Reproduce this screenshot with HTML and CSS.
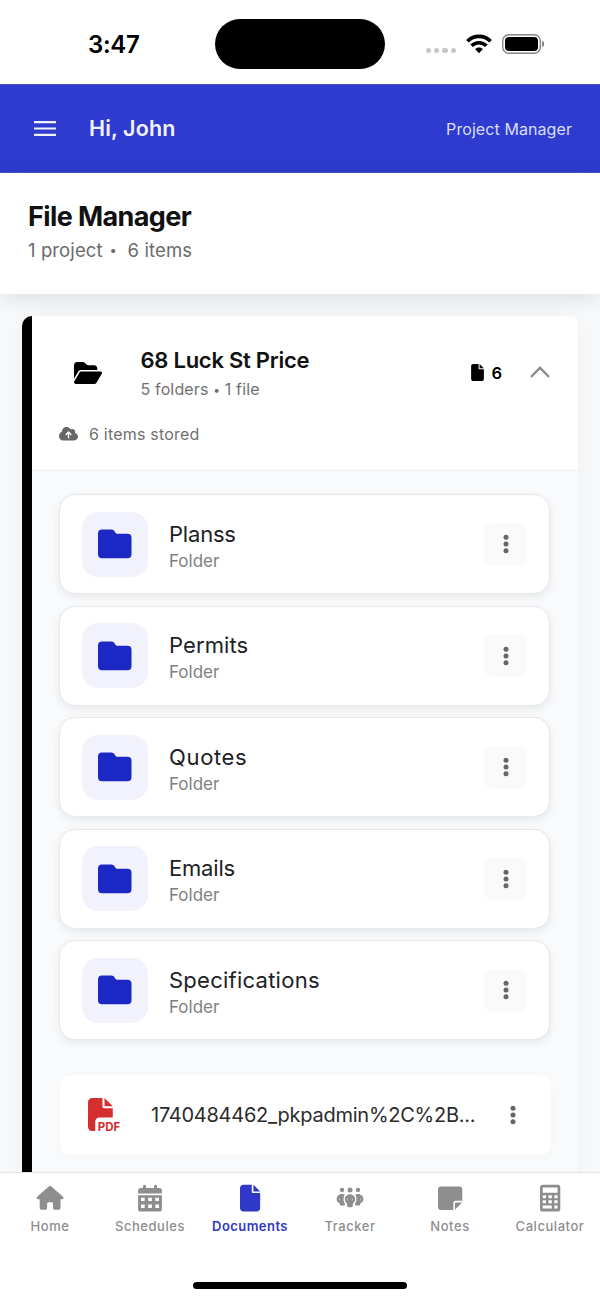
FILE: index.html
```html
<!DOCTYPE html>
<html lang="en">
<head>
<meta charset="utf-8">
<title>File Manager</title>
<link rel="stylesheet" href="styles.css">
</head>
<body>
<svg class="defs" width="0" height="0" aria-hidden="true">
  <symbol id="folder" viewBox="0 0 34 30"><path d="M0 4.5A4 4 0 0 1 4 .5H13.2C15 .5 15.8 1.2 16.6 2.4L17.7 3.9C18.2 4.5 18.7 4.7 19.5 4.7H29.5A4 4 0 0 1 33.5 8.7V25.3A4 4 0 0 1 29.5 29.3H4A4 4 0 0 1 0 25.3Z"/></symbol>
  <symbol id="file" viewBox="0 0 384 512"><path d="M0 64C0 28.7 28.7 0 64 0H224V128c0 17.7 14.3 32 32 32H384V448c0 35.3-28.7 64-64 64H64c-35.3 0-64-28.7-64-64V64zm384 64H256V0L384 128z"/></symbol>
  <symbol id="dots" viewBox="0 0 6 20"><circle cx="3" cy="3.2" r="2.5"/><circle cx="3" cy="10" r="2.5"/><circle cx="3" cy="16.8" r="2.5"/></symbol>
</svg>
<div class="screen">
  <div class="status">
    <span class="time">3:47</span>
    <span class="island"></span>
    <span class="indicators">
      <span class="signal"><i></i><i></i><i></i><i></i></span>
      <svg class="wifi" viewBox="0 0 26 20"><g fill="none" stroke="#000" stroke-width="3.6"><path d="M1.4 7.2C8 .7 18 .7 24.6 7.2"/><path d="M5.6 11.8C9.8 7.7 16.2 7.7 20.4 11.8"/></g><path d="M9 15.1C11.3 13 14.7 13 17 15.1L13 19.2Z"/></svg>
      <svg class="battery" viewBox="0 0 43 20"><rect x=".7" y=".7" width="37.6" height="18.6" rx="6.2" fill="none" stroke="#858585" stroke-width="1.4"/><rect x="3" y="3" width="33" height="14" rx="4"/><path d="M40.2 6.8C42.8 8 42.8 12 40.2 13.2Z" fill="#777"/></svg>
    </span>
  </div>
  <header class="topbar">
    <svg class="menu" viewBox="0 0 22 15"><path d="M0 1.2H22M0 7.5H22M0 13.8H22" stroke="#f1f2ff" stroke-width="2.2"/></svg>
    <span class="hello">Hi, John</span>
    <span class="role">Project Manager</span>
  </header>
  <section class="heading">
    <h1>File Manager</h1>
    <p><span>1 project</span><span class="bullet">•</span><span>6 items</span></p>
  </section>
  <main class="content">
    <article class="project">
      <div class="project-head">
        <div class="project-row">
          <svg class="folder-open" viewBox="0 32 576 448"><path d="M88.700 223.800L0 375.800V96C0 60.700 28.700 32 64 32H181.500c17 0 33.300 6.700 45.300 18.700l26.500 26.500c12 12 28.300 18.700 45.300 18.700H416c35.300 0 64 28.700 64 64v32H144c-22.800 0-43.800 12.100-55.300 31.800zm27.600 16.100C122.100 230 132.600 224 144 224H544c11.500 0 22 6.100 27.700 16.100s5.700 22.200-.1 32.100l-112 192C453.900 474 443.400 480 432 480H32c-11.500 0-22-6.100-27.700-16.100s-5.700-22.200.1-32.100l112-192z"/></svg>
          <div class="project-text">
            <h2>68 Luck St Price</h2>
            <p>5 folders <span class="dot">•</span> 1 file</p>
          </div>
          <svg class="count-icon"><use href="#file"/></svg>
          <span class="count">6</span>
          <svg class="chevron" viewBox="0 0 20 12"><path d="M1 11L10 1.800L19 11" fill="none" stroke="#8e8e8e" stroke-width="2.400"/></svg>
        </div>
        <div class="stored">
          <svg class="cloud" viewBox="0 32 640 448"><path d="M144 480C64.500 480 0 415.500 0 336c0-62.800 40.200-116.200 96.200-135.900c-.1-2.700-.2-5.400-.2-8.100c0-88.400 71.600-160 160-160c59.300 0 111 32.200 138.700 80.200C409.900 102 428.300 96 448 96c53 0 96 43 96 96c0 12.200-2.300 23.800-6.400 34.600C596 238.400 640 290.100 640 352c0 70.700-57.300 128-128 128H144zm79-217c-9.400 9.400-9.400 24.600 0 33.900s24.600 9.400 33.900 0l39-39V392c0 13.300 10.700 24 24 24s24-10.700 24-24V257.900l39 39c9.400 9.400 24.600 9.400 33.900 0s9.400-24.600 0-33.900l-80-80c-9.400-9.400-24.600-9.400-33.900 0l-80 80z"/></svg>
          <span>6 items stored</span>
        </div>
      </div>
      <div class="project-body">
        <div class="folder-card">
          <span class="tile"><svg class="folder"><use href="#folder"/></svg></span>
          <div class="folder-text"><h3 class="tight">Planss</h3><p>Folder</p></div>
          <span class="more"><svg class="dots"><use href="#dots"/></svg></span>
        </div>
        <div class="folder-card">
          <span class="tile"><svg class="folder"><use href="#folder"/></svg></span>
          <div class="folder-text"><h3>Permits</h3><p>Folder</p></div>
          <span class="more"><svg class="dots"><use href="#dots"/></svg></span>
        </div>
        <div class="folder-card">
          <span class="tile"><svg class="folder"><use href="#folder"/></svg></span>
          <div class="folder-text"><h3 class="wide">Quotes</h3><p>Folder</p></div>
          <span class="more"><svg class="dots"><use href="#dots"/></svg></span>
        </div>
        <div class="folder-card">
          <span class="tile"><svg class="folder"><use href="#folder"/></svg></span>
          <div class="folder-text"><h3 class="tight">Emails</h3><p>Folder</p></div>
          <span class="more"><svg class="dots"><use href="#dots"/></svg></span>
        </div>
        <div class="folder-card">
          <span class="tile"><svg class="folder"><use href="#folder"/></svg></span>
          <div class="folder-text"><h3 class="long">Specifications</h3><p>Folder</p></div>
          <span class="more"><svg class="dots"><use href="#dots"/></svg></span>
        </div>
        <div class="file-card">
          <svg class="pdf" viewBox="0 0 33 36"><path transform="scale(.0645)" d="M0 64C0 28.700 28.700 0 64 0H224V128c0 17.700 14.300 32 32 32H384V304H176c-35.300 0-64 28.700-64 64V512H64c-35.300 0-64-28.700-64-64V64zm384 64H256V0L384 128z"/><text x="9.800" y="32.600" textLength="22.400" lengthAdjust="spacingAndGlyphs">PDF</text></svg>
          <span class="file-name">1740484462_pkpadmin%2C%2B...</span>
          <svg class="dots"><use href="#dots"/></svg>
        </div>
      </div>
    </article>
  </main>
  <nav class="tabs">
    <a class="tab"><svg viewBox="0 0 28 28"><path transform="translate(.7 2) scale(.0465)" d="M575.800 255.500c0 18-15 32.100-32 32.100h-32l.7 160.200c0 2.700-.2 5.400-.5 8.100V472c0 22.100-17.900 40-40 40H392c-22.100 0-40-17.900-40-40V384c0-17.700-14.300-32-32-32H256c-17.700 0-32 14.300-32 32v88c0 22.100-17.900 40-40 40H104c-22.100 0-40-17.900-40-40V287.600H32c-18 0-32-14-32-32.100c0-9 3-17 10-24L266.400 8c7-7 15-8 22-8s15 2 21 7L564.800 231.500c8 7 12 15 11 24z"/></svg><span>Home</span></a>
    <a class="tab"><svg viewBox="0 0 28 28"><path fill-rule="evenodd" d="M2.100 9.400V6.700Q2.100 4.100 4.700 4.100H7V2.200a1.500 1.500 0 0 1 3 0V4.100H18V2.200a1.500 1.500 0 0 1 3 0V4.100h2.300Q25.900 4.100 25.900 6.700V9.400ZM2.100 11.200H25.900V25Q25.900 27.600 23.300 27.600H4.700Q2.100 27.600 2.100 25ZM5 13.700v3.300h3.700v-3.300ZM12.200 13.700v3.300h3.700v-3.300ZM19.300 13.700v3.300h3.700v-3.300ZM5 20.600v3.300h3.700v-3.300ZM12.200 20.600v3.300h3.700v-3.300ZM19.300 20.600v3.300h3.700v-3.300Z"/></svg><span>Schedules</span></a>
    <a class="tab active"><svg viewBox="0 0 28 28"><path transform="translate(4 .7) scale(.0525)" d="M0 64C0 28.700 28.700 0 64 0H224V128c0 17.700 14.300 32 32 32H384V448c0 35.300-28.700 64-64 64H64c-35.300 0-64-28.700-64-64V64zm384 64H256V0L384 128z"/></svg><span>Documents</span></a>
    <a class="tab"><svg viewBox="0 0 28 28"><circle cx="6" cy="5.900" r="2.200"/><circle cx="14" cy="6.100" r="2.500"/><circle cx="22" cy="5.900" r="2.200"/><path fill-rule="evenodd" d="M14 10.200C17 10.200 19.200 12.500 19.200 15.300C19.200 17.300 18.200 18.700 16.900 19.500V21.500Q16.900 23.300 15.300 23.300H12.700Q11.100 23.300 11.100 21.500V19.500C9.800 18.700 8.800 17.300 8.800 15.300C8.800 12.500 11 10.200 14 10.200ZM11.800 13.700Q10.700 15.400 11.800 17ZM16.200 13.700V17Q17.300 15.400 16.200 13.700Z"/><path fill-rule="evenodd" d="M8.900 10.500C7.200 12.800 6.900 17.300 9 19.600V20.200Q9 21.500 7.700 21.500H5.200Q3.700 21.500 3.700 20V19.200C1.700 18.700.6 17 .6 15.300C.6 12.500 3 10.100 5.800 10.100Q7.500 10.100 8.900 10.500ZM3.800 13.500Q2.700 15.200 3.800 16.900ZM19.100 10.500C20.800 12.800 21.100 17.300 19 19.600V20.200Q19 21.500 20.300 21.500H22.800Q24.300 21.500 24.300 20V19.200C26.300 18.700 27.400 17 27.400 15.300C27.400 12.500 25 10.100 22.200 10.100Q20.500 10.100 19.100 10.500ZM24.200 13.500Q25.300 15.200 24.200 16.900Z"/></svg><span>Tracker</span></a>
    <a class="tab"><svg viewBox="0 0 28 28"><path d="M5 2.500H23.300Q26.300 2.500 26.300 5.500V16.800H19.900Q17.300 16.800 17.300 19.400V26H5Q2 26 2 23V5.500Q2 2.500 5 2.500ZM26.100 18.600L18.900 25.800V19.600Q18.900 18.600 19.900 18.600Z"/></svg><span>Notes</span></a>
    <a class="tab"><svg viewBox="0 0 28 28"><path fill-rule="evenodd" d="M7 .7H21.600Q24.300 .7 24.300 3.400V25Q24.300 27.600 21.600 27.600H6.700Q4 27.600 4 25V3.400Q4 .7 7 .7ZM6.700 3.500V8.700H21.600V3.500ZM6.700 11.200v3h3.300v-3ZM12.500 11.200v3h3.300v-3ZM18.300 11.200v3h3.300v-3ZM6.700 16.300v3h3.300v-3ZM12.500 16.300v3h3.300v-3ZM18.300 16.300v3h3.300v-3ZM6.700 21.500v3h9.100v-3ZM18.300 21.500v3h3.300v-3Z"/></svg><span>Calculator</span></a>
  </nav>
  <div class="home-area"><span class="home-indicator"></span></div>
</div>
</body>
</html>
```
FILE: styles.css
```css
* { box-sizing: border-box; }
body, h1, h2, h3, p { margin: 0; }
body { font-family: Inter, "Liberation Sans", sans-serif; background: #fff; }
.defs { position: absolute; }
svg { display: block; flex: none; }
span, h1, h2, h3, p { white-space: nowrap; }
.screen { width: 600px; height: 1300px; display: flex; flex-direction: column; overflow: hidden; }

.status { height: 84px; flex: none; display: grid; grid-template-columns: 215px 170px 215px; align-items: center; padding-top: 4px; }
.time { padding: 2px 0 0 88px; font-size: 24px; font-weight: 600; letter-spacing: -0.3px; line-height: 30px; }
.island { height: 50px; border-radius: 25px; background: #000; }
.indicators { display: flex; align-items: center; padding-left: 41px; }
.signal { display: flex; gap: 3px; padding-top: 13px; }
.signal i { width: 5.200px; height: 5.200px; border-radius: 50%; background: #c6c6c6; }
.wifi { width: 26px; height: 20px; margin-left: 10px; }
.battery { width: 43px; height: 20px; margin-left: 10px; }

.topbar { height: 89px; flex: none; display: flex; align-items: center; padding: 0 28px 0 33.500px; background: #2f3bce; border-top: 1px solid #4b54b8; border-bottom: 1px solid #4851c4; color: #f1f2ff; }
.menu { width: 22px; height: 15px; }
.hello { margin-left: 33.500px; padding-bottom: 2px; font-size: 21.500px; font-weight: 600; letter-spacing: .15px; }
.role { margin-left: auto; font-size: 16px; letter-spacing: 0.08px; color: #d9ddff; padding-top: 1px; }

.heading { height: 121px; flex: none; padding: 27px 28px 0; background: #fff; position: relative; box-shadow: 0 4px 20px rgba(30, 40, 45, .13); }
.heading h1 { font-size: 27px; line-height: 34px; font-weight: 650; letter-spacing: -0.6px; color: #111; }
.heading p { display: flex; margin-top: 4px; font-size: 18.500px; letter-spacing: .1px; line-height: 24px; color: #6b6b6b; }
.bullet { width: 25px; padding-left: 7px; font-size: 13px; }

.content { height: 878px; flex: none; padding: 22px 22px 0 22px; background: #f8f9fb; overflow: hidden; }
.project { height: 900px; border-left: 10px solid #000; border-radius: 10px 8px 0 0; box-shadow: 0 2px 24px rgba(0, 0, 0, .045); background: #f9fafc; overflow: hidden; }
.project-head { height: 155px; padding: 28px 28px 0 27px; background: #fff; border-bottom: 1px solid #eceeef; }
.project-row { display: flex; align-items: center; height: 57px; }
.folder-open { width: 28px; height: 22px; margin-left: 15px; }
.project-text { flex: 1; margin-left: 38.500px; }
.project-text h2 { font-size: 22px; line-height: 32px; font-weight: 600; letter-spacing: -0.25px; color: #111; }
.project-text p { padding-top: 1px; margin-bottom: -1px; font-size: 16px; line-height: 25px; letter-spacing: .15px; color: #707070; }
.dot { font-size: 12px; vertical-align: 1px; }
.count-icon { width: 13px; height: 17px; }
.count { margin-left: 7px; font-size: 16.500px; font-weight: 600; line-height: 20px; }
.chevron { width: 20px; height: 12px; margin-left: 28px; margin-top: -2px; }
.stored { display: flex; align-items: center; gap: 11px; height: 24px; margin-top: 21px; font-size: 16px; letter-spacing: .2px; color: #707070; }
.cloud { width: 19px; height: 13.500px; fill: #666; }

.project-body { padding: 23px 0 0 27px; display: flex; flex-direction: column; gap: 11.500px; }
.folder-card { height: 100px; width: 491px; flex: none; display: flex; align-items: center; padding: 0 22px 0 21.500px; background: #fff; border: 1.500px solid #e7e8ea; border-radius: 16px; box-shadow: 0 3px 9px rgba(0, 0, 0, .075); }
.tile { width: 66px; height: 65px; border-radius: 16px; background: #f2f2fc; display: grid; place-items: center; }
.folder { width: 34px; height: 30px; fill: #1b28c4; }
.folder-text { flex: 1; margin-left: 21.500px; padding-top: 5px; }
.folder-text h3 { font-size: 22px; line-height: 28px; font-weight: 380; letter-spacing: .1px; color: #202124; }
.folder-text h3.tight { letter-spacing: -.2px; }
.folder-text h3.wide { letter-spacing: .65px; }
.folder-text h3.long { letter-spacing: .25px; }
.folder-text p { font-size: 17px; line-height: 26px; color: #808080; }
.more { width: 43px; height: 43px; border-radius: 8px; background: #fafafb; display: grid; place-items: center; }
.dots { width: 6px; height: 20px; fill: #666; }
.file-card { display: flex; align-items: center; height: 82px; width: 493px; margin-top: 22px; padding: 0 35px 0 28px; background: #fff; border: 1px solid #f7f8f8; border-radius: 12px; box-shadow: 0 2px 8px rgba(0, 0, 0, .02); }
.pdf { width: 33px; height: 36px; margin-top: 3px; fill: #d32f2f; }
.pdf text { font: 700 12px Inter, sans-serif; }
.file-name { flex: 1; margin-left: 30px; font-size: 20px; font-weight: 380; letter-spacing: -.25px; color: #2b2b2b; }

.tabs { height: 68px; flex: none; display: grid; grid-template-columns: repeat(6, 100px); background: #fff; border-top: 1px solid #e5e6e8; }
.tab { display: flex; flex-direction: column; align-items: center; padding-top: 11px; color: #8e8e8e; font-size: 13px; font-weight: 500; letter-spacing: .55px; line-height: 18px; }
.tab svg { width: 28px; height: 28px; fill: currentColor; }
.tab span { margin-top: 5px; }
.tab.active { color: #3038c8; font-weight: 600; letter-spacing: .45px; }
.home-area { height: 60px; flex: none; display: flex; justify-content: center; padding-top: 42px; }
.home-indicator { width: 214px; height: 7px; border-radius: 4px; background: #000; }
```
